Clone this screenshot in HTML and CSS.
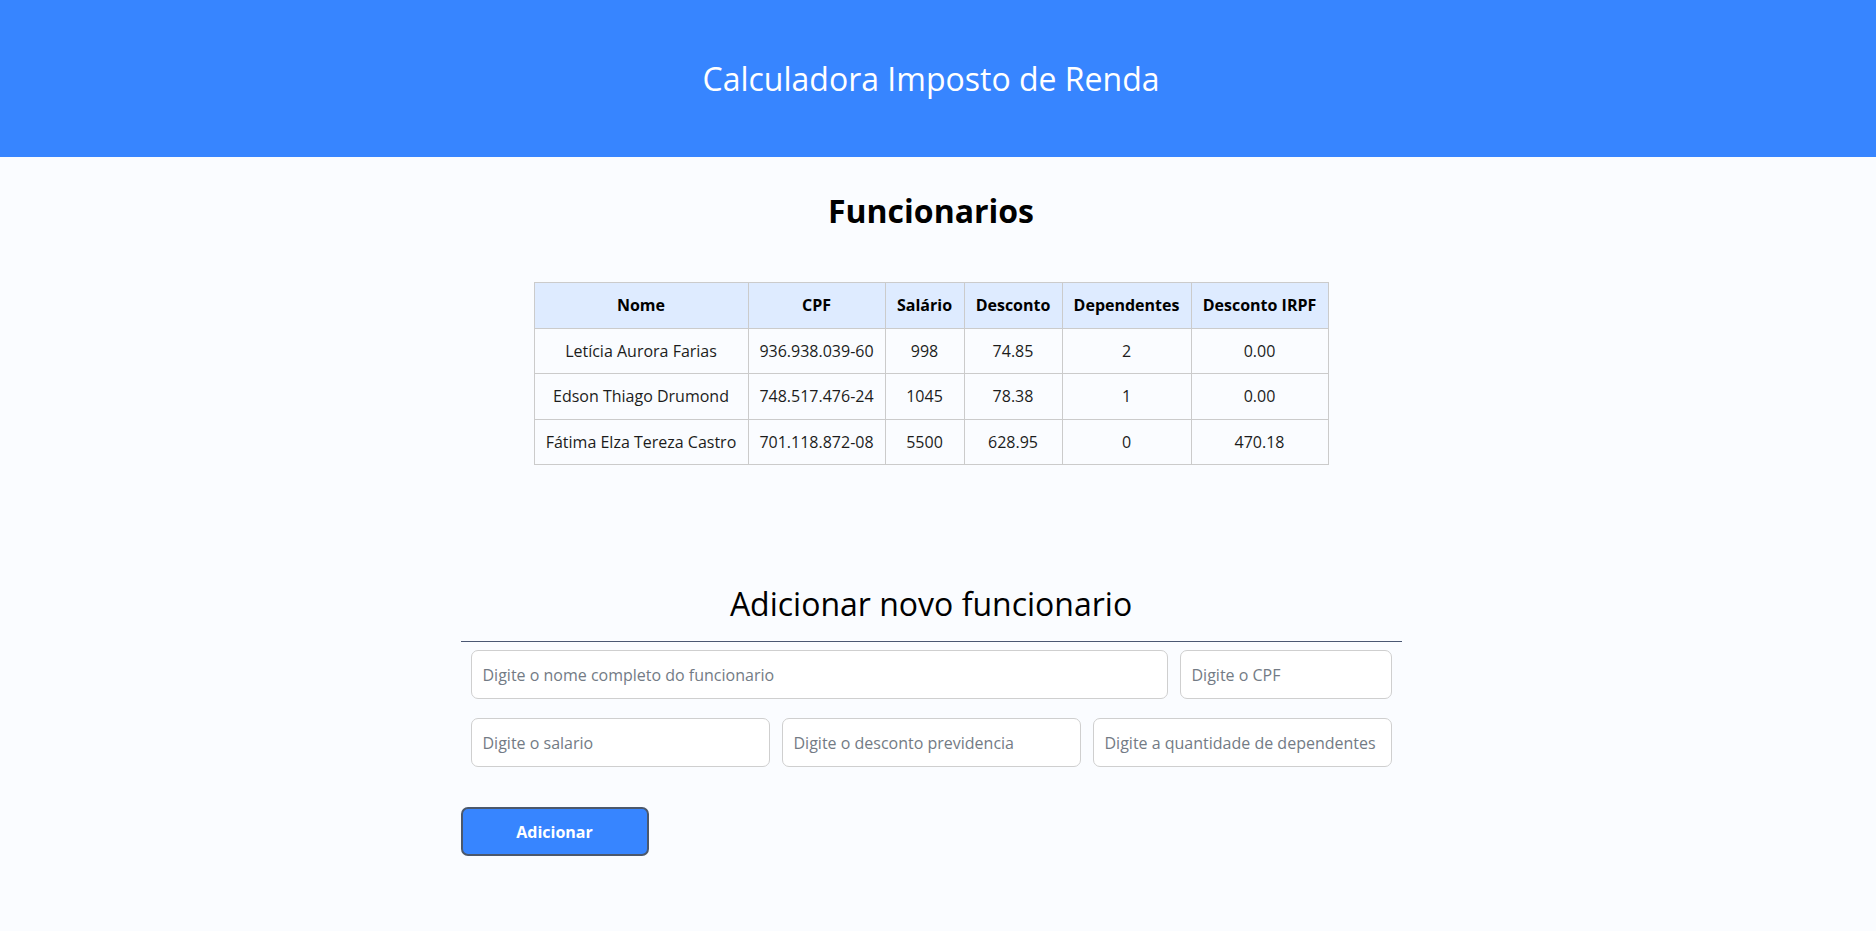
FILE: index.html
```html
<!DOCTYPE html>
<html lang="pt-BR">
<head>
<meta charset="utf-8">
<title>Calculadora Imposto de Renda</title>
<link rel="stylesheet" href="styles.css">
</head>
<body>
<header class="topbar">
  <h1 class="topbar-title">Calculadora Imposto de Renda</h1>
</header>
<main class="page">
  <section class="employees">
    <h2 class="section-title">Funcionarios</h2>
    <table class="employees-table">
      <colgroup>
        <col class="col-nome">
        <col class="col-cpf">
        <col class="col-salario">
        <col class="col-desconto">
        <col class="col-dependentes">
        <col class="col-irpf">
      </colgroup>
      <thead>
        <tr>
          <th>Nome</th>
          <th>CPF</th>
          <th>Salário</th>
          <th>Desconto</th>
          <th>Dependentes</th>
          <th>Desconto IRPF</th>
        </tr>
      </thead>
      <tbody>
        <tr>
          <td>Letícia Aurora Farias</td>
          <td>936.938.039-60</td>
          <td>998</td>
          <td>74.85</td>
          <td>2</td>
          <td>0.00</td>
        </tr>
        <tr>
          <td>Edson Thiago Drumond</td>
          <td>748.517.476-24</td>
          <td>1045</td>
          <td>78.38</td>
          <td>1</td>
          <td>0.00</td>
        </tr>
        <tr>
          <td>Fátima Elza Tereza Castro</td>
          <td>701.118.872-08</td>
          <td>5500</td>
          <td>628.95</td>
          <td>0</td>
          <td>470.18</td>
        </tr>
      </tbody>
    </table>
  </section>

  <section class="new-employee">
    <h2 class="form-title">Adicionar novo funcionario</h2>
    <form class="employee-form">
      <div class="form-row form-row-top">
        <input class="field" type="text" placeholder="Digite o nome completo do funcionario">
        <input class="field" type="text" placeholder="Digite o CPF">
      </div>
      <div class="form-row form-row-bottom">
        <input class="field" type="text" placeholder="Digite o salario">
        <input class="field" type="text" placeholder="Digite o desconto previdencia">
        <input class="field" type="text" placeholder="Digite a quantidade de dependentes">
      </div>
      <button class="add-button" type="button">Adicionar</button>
    </form>
  </section>
</main>
</body>
</html>
```

FILE: styles.css
```css
* {
  box-sizing: border-box;
}

html, body {
  margin: 0;
  padding: 0;
}

body {
  background: #fafcff;
  font-family: "Open Sans", "Noto Sans", "Liberation Sans", sans-serif;
  color: #111;
  min-height: 931px;
}

.topbar {
  background: #3785ff;
  height: 157px;
  display: flex;
  align-items: center;
  justify-content: center;
  padding: 0 14px 0 0;
}

.topbar-title {
  margin: 0;
  font-size: 32px;
  font-weight: 400;
  line-height: 40px;
  color: #ffffff;
}

.page {
  padding: 0 14px 40px 0;
}

.employees {
  display: flex;
  flex-direction: column;
  align-items: center;
}

.section-title {
  margin: 34px 0 51px;
  font-size: 32px;
  font-weight: 700;
  line-height: 40px;
  color: #000;
}

.employees-table {
  border-collapse: collapse;
  table-layout: fixed;
  width: 794px;
  font-size: 16px;
  color: #1c1c1c;
}

.col-nome { width: 214px; }
.col-cpf { width: 137px; }
.col-salario { width: 79px; }
.col-desconto { width: 98px; }
.col-dependentes { width: 129px; }
.col-irpf { width: 137px; }

.employees-table th,
.employees-table td {
  border: 1px solid #cbcbcb;
  padding: 11px 4px;
  line-height: 22.5px;
  text-align: center;
  white-space: nowrap;
}

.employees-table th {
  background: #deebff;
  font-weight: 700;
  color: #000;
}

.employees-table td {
  background: #fafcff;
}

.new-employee {
  width: 941px;
  margin: 119px auto 0;
}

.form-title {
  margin: 0;
  padding-bottom: 17px;
  border-bottom: 1px solid #4a5773;
  font-size: 32px;
  font-weight: 400;
  line-height: 40px;
  text-align: center;
  color: #000;
}

.employee-form {
  display: flex;
  flex-direction: column;
  padding-top: 8px;
}

.form-row {
  display: grid;
  gap: 12px;
  padding: 0 10px;
}

.form-row-top {
  grid-template-columns: 1fr 212px;
}

.form-row-bottom {
  grid-template-columns: 1fr 1fr 1fr;
  margin-top: 19px;
}

.field {
  height: 49px;
  width: 100%;
  padding: 0 11px;
  border: 1px solid #cfcfcf;
  border-radius: 7px;
  background: #ffffff;
  font-family: inherit;
  font-size: 16px;
  color: #333;
}

.field::placeholder {
  color: #737b85;
}

.add-button {
  align-self: flex-start;
  margin: 40px 0 0 0;
  width: 188px;
  height: 49px;
  border: 2px solid #4b586c;
  border-radius: 7px;
  background: #3785ff;
  color: #ffffff;
  font-family: inherit;
  font-size: 16px;
  font-weight: 700;
}
```
